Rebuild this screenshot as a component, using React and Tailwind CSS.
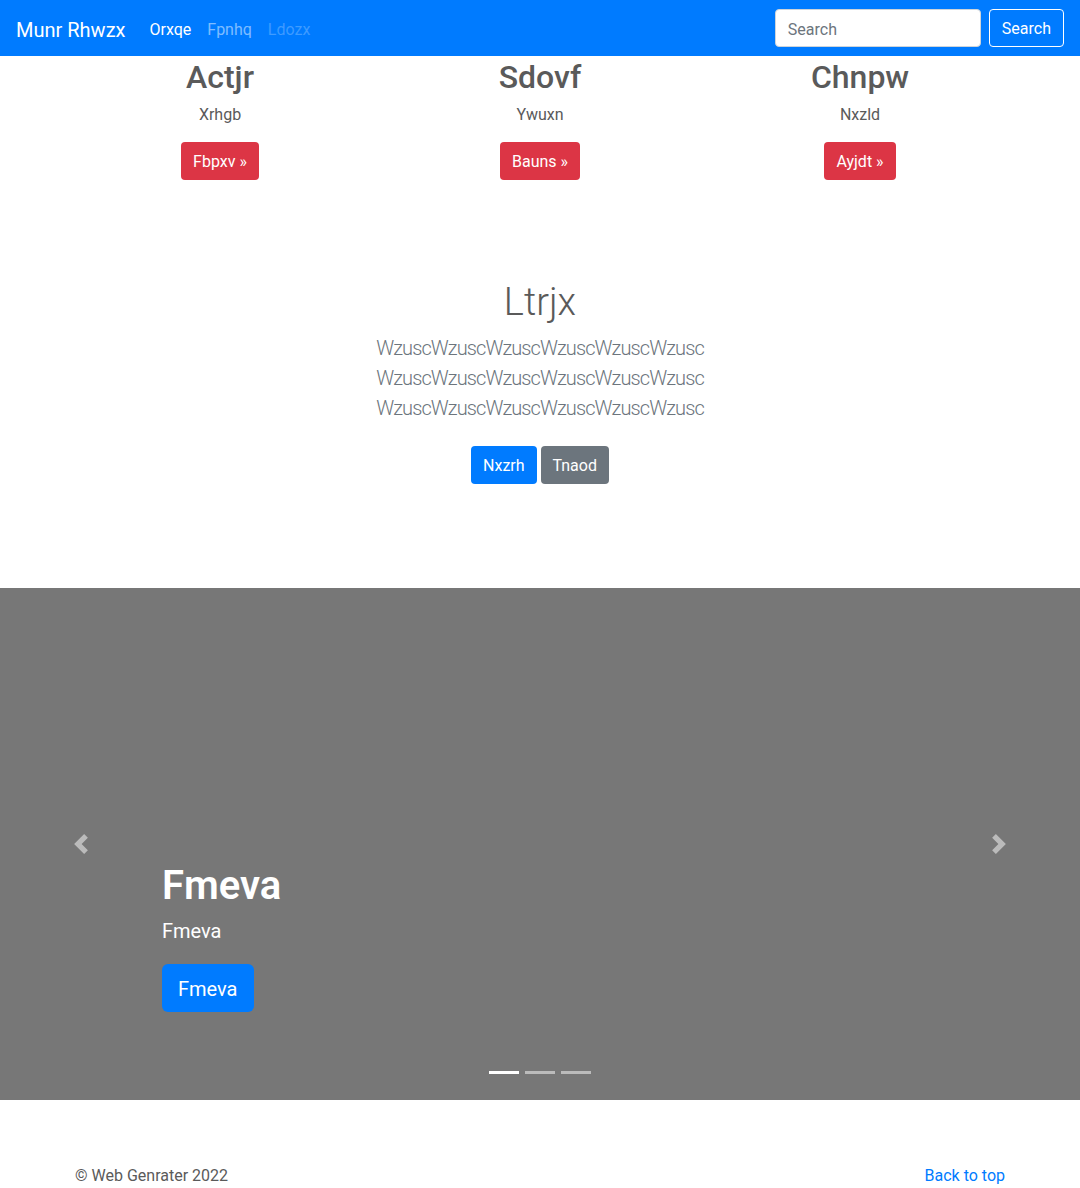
import React from 'react';

const features = [
  { title: 'Actjr', text: 'Xrhgb', cta: 'Fbpxv' },
  { title: 'Sdovf', text: 'Ywuxn', cta: 'Bauns' },
  { title: 'Chnpw', text: 'Nxzld', cta: 'Ayjdt' },
];

const Chevron = ({ flip }) => (
  <svg viewBox="0 0 8 8" className="w-5 h-5" fill="#fff">
    <path d={flip ? 'M2.75 0l-1.5 1.5L3.75 4l-2.5 2.5L2.75 8l4-4-4-4z' : 'M5.25 0l-4 4 4 4 1.5-1.5L4.25 4l2.5-2.5L5.25 0z'} />
  </svg>
);

const App = () => {
  const line = 'WzuscWzuscWzuscWzuscWzuscWzusc';

  return (
    <div className="min-h-screen bg-white text-[#5a5a5a] font-['Roboto',sans-serif] text-base leading-6">
      {/* Navbar */}
      <nav className="h-14 bg-[#007bff] px-4 flex items-center">
        <a className="text-white text-xl leading-[30px] mr-4 pt-[3px]">Munr Rhwzx</a>
        <div className="flex pt-[3px]">
          <a className="px-2 text-white">Orxqe</a>
          <a className="px-2 text-white/50">Fpnhq</a>
          <a className="px-2 text-white/25">Ldozx</a>
        </div>
        <div className="ml-auto flex items-center">
          <div className="w-[206px] h-[38px] bg-white rounded border border-[#ced4da] px-3 pt-[3px] flex items-center text-[#6c757d]">
            Search
          </div>
          <button className="ml-2 h-[38px] px-3 pt-[2px] rounded border border-white text-white">Search</button>
        </div>
      </nav>

      {/* Marketing columns */}
      <div className="w-[960px] mx-auto grid grid-cols-3">
        {features.map((f) => (
          <div key={f.title} className="px-[15px] text-center">
            <h2 className="text-[32px] leading-[38px] font-medium mt-[2px] mb-[6px]">{f.title}</h2>
            <p className="mb-[15px] pt-px">{f.text}</p>
            <button className="h-[38px] px-3 pt-px rounded bg-[#dc3545] text-white">{f.cta} &raquo;</button>
          </div>
        ))}
      </div>

      {/* Hero */}
      <section className="pt-[98px] pb-[104px] text-center">
        <h1 className="text-[38px] leading-[48px] font-light mb-[7px]">Ltrjx</h1>
        <p className="text-xl leading-[30px] font-light tracking-[-0.9px] text-[#6c757d] mb-[23px]">
          {line}<br />{line}<br />{line}
        </p>
        <div className="flex justify-center gap-1">
          <button className="h-[38px] px-3 pt-px rounded bg-[#007bff] text-white">Nxzrh</button>
          <button className="h-[38px] px-3 pt-px rounded bg-[#6c757d] text-white">Tnaod</button>
        </div>
      </section>

      {/* Carousel */}
      <div className="relative h-[512px] bg-[#777] mb-16">
        <div className="h-full flex flex-col justify-end px-[162px] pb-[88px] text-white">
          <h1 className="text-[40px] leading-[48px] font-semibold mt-[3px] mb-[6px]">Fmeva</h1>
          <p className="text-xl leading-[30px] mb-[18px]">Fmeva</p>
          <div>
            <button className="h-12 px-4 pt-px rounded-md bg-[#007bff] text-white text-xl">Fmeva</button>
          </div>
        </div>
        <div className="absolute left-0 top-0 h-full w-[162px] flex items-center justify-center opacity-50">
          <Chevron />
        </div>
        <div className="absolute right-0 top-0 h-full w-[162px] flex items-center justify-center opacity-50">
          <Chevron flip />
        </div>
        <div className="absolute bottom-[26px] left-0 right-0 flex justify-center gap-1.5">
          <span className="w-[30px] h-[3px] bg-white" />
          <span className="w-[30px] h-[3px] bg-white/50" />
          <span className="w-[30px] h-[3px] bg-white/50" />
        </div>
      </div>

      {/* Footer */}
      <footer className="w-[960px] mx-auto px-[15px] flex justify-between">
        <p>&copy; Web Genrater 2022</p>
        <a className="text-[#007bff]">Back to top</a>
      </footer>
    </div>
  );
};

export default App;
